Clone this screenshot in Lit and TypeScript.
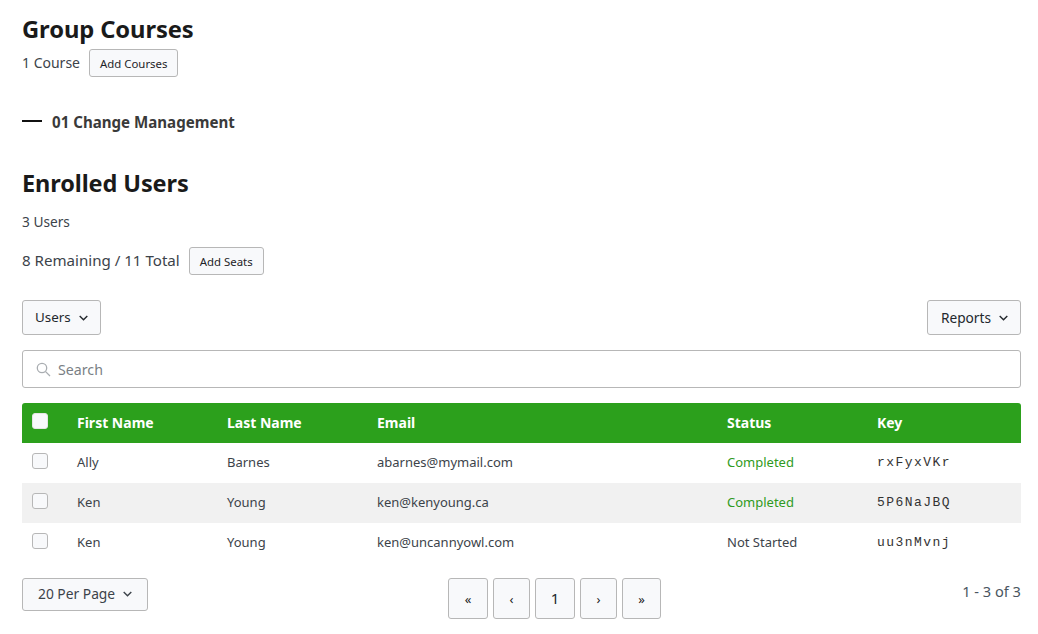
import { LitElement, html, css } from "lit";
import { customElement } from "lit/decorators.js";

const chevron = html`<svg class="chev" width="9" height="6" viewBox="0 0 9 6" fill="none" stroke="currentColor" stroke-width="1.4"><path d="M.7 1l3.8 3.8L8.3 1"/></svg>`;
const rows = [
  { first: "Ally", last: "Barnes", email: "abarnes@mymail.com", status: "Completed", key: "rxFyxVKr" },
  { first: "Ken", last: "Young", email: "ken@kenyoung.ca", status: "Completed", key: "5P6NaJBQ" },
  { first: "Ken", last: "Young", email: "ken@uncannyowl.com", status: "Not Started", key: "uu3nMvnj" },
];

@customElement("app-root")
export class AppRoot extends LitElement {
  static styles = css`
    :host { display: block; height: 634px; box-sizing: border-box; padding: 13px 17px 0 22px; font-family: "Noto Sans", "Open Sans", sans-serif; color: #3c434a; background: #fff; overflow: hidden; }
    h1, h2 { margin: 0; font-size: 23.5px; line-height: 32px; font-weight: 700; color: #1a1a1a; letter-spacing: -0.1px; }
    h1 { font-size: 23.75px; }
    .line { display: flex; align-items: center; line-height: 20px; }
    .lift { padding-bottom: 2px; }
    .courses { margin-top: 4px; height: 28px; gap: 9px; font-size: 14px; }
    .small { height: 28px; padding: 0 10px; font-size: 11.4px; color: #1d2327; }
    button { font-family: inherit; box-sizing: border-box; background: #f8f9fb; border: 1px solid #b7b7b7; border-radius: 3px; color: #23282d; display: inline-flex; align-items: center; justify-content: center; margin: 0; }
    .course { margin-top: 34px; height: 22px; display: flex; align-items: center; gap: 10px; font-size: 15.1px; font-weight: 700; color: #3a3a3a; }
    .dash { width: 20px; height: 2px; background: #111; margin-top: -2px; }
    h2 { margin-top: 34px; }
    .users { margin-top: 13px; height: 20px; font-size: 13.7px; }
    .seats { margin-top: 15px; height: 28px; gap: 9px; font-size: 15.1px; }
    .toolbar { margin-top: 25px; display: flex; justify-content: space-between; }
    .drop { height: 35px; padding: 0 12px 1px; gap: 8px; font-size: 13.7px; }
    .drop.u { font-size: 13.4px; }
    .drop.r { padding-left: 13px; }
    .chev { display: block; margin-top: 1px; }
    .search { margin-top: 15px; height: 38px; box-sizing: border-box; border: 1px solid #b7b7b7; border-radius: 3px; display: flex; align-items: center; gap: 7px; padding-left: 13px; font-size: 14.2px; color: #7a7f85; }
    .table { margin-top: 15px; }
    .row { display: grid; grid-template-columns: 55px 150px 150px 350px 150px 1fr; height: 40px; box-sizing: border-box; padding-bottom: 2px; align-items: center; font-size: 13px; color: #3c434a; }
    .row.alt { background: #f1f1f1; }
    .row.head { background: #2ca01c; color: #fff; font-weight: 700; font-size: 14px; border-radius: 3px 3px 0 0; }
    .box { display: block; width: 16px; height: 16px; box-sizing: border-box; margin: -2px 0 0 10px; background: #f8f9fb; border: 1px solid #b7b7b7; border-radius: 3px; }
    .head .box { border-color: #e5e5e5; }
    .done { color: #2f9a22; }
    .key { font-family: "Liberation Mono", monospace; font-size: 13px; letter-spacing: 1.45px; color: #333; }
    .footer { margin-top: 15px; display: flex; justify-content: space-between; align-items: flex-start; }
    .per { height: 33px; padding: 0 15px 2px; gap: 8px; font-size: 13.8px; color: #3c434a; }
    .pages { display: flex; gap: 5px; }
    .pages button { height: 41px; font-size: 13px; padding: 0; color: #222; }
    .pages button.num { font-size: 15px; color: #23282d; padding-bottom: 2px; }
    .count { width: 60px; text-align: right; white-space: nowrap; font-size: 14.6px; line-height: 20px; margin-top: 3px; color: #4a5560; }
    .w40 { width: 40px; }
    .w37 { width: 37px; }
    .w39 { width: 39px; }
  `;

  render() {
    return html`
      <h1>Group Courses</h1>
      <div class="line courses"><span>1 Course</span><button class="small">Add Courses</button></div>
      <div class="course"><span class="dash"></span><span>01 Change Management</span></div>
      <h2>Enrolled Users</h2>
      <div class="line users">3 Users</div>
      <div class="line seats"><span class="lift">8 Remaining / 11 Total</span><button class="small">Add Seats</button></div>
      <div class="toolbar">
        <button class="drop u">Users ${chevron}</button>
        <button class="drop r">Reports ${chevron}</button>
      </div>
      <div class="search">
        <svg width="15" height="15" viewBox="0 0 15 15" fill="none" stroke="#a9adb1" stroke-width="1.3"><circle cx="6" cy="6" r="4.7"/><path d="M9.6 9.6l4.4 4.4"/></svg>
        <span>Search</span>
      </div>
      <div class="table">
        <div class="row head">
          <span class="box"></span><span>First Name</span><span>Last Name</span><span>Email</span><span>Status</span><span>Key</span>
        </div>
        ${rows.map((r, i) => html`
          <div class="row ${i === 1 ? "alt" : ""}">
            <span class="box"></span><span>${r.first}</span><span>${r.last}</span><span>${r.email}</span>
            <span class="${r.status === "Completed" ? "done" : ""}">${r.status}</span>
            <span class="key">${r.key}</span>
          </div>`)}
      </div>
      <div class="footer">
        <button class="per">20 Per Page ${chevron}</button>
        <div class="pages">
          <button class="w40">«</button>
          <button class="w37">‹</button>
          <button class="num w40">1</button>
          <button class="w37">›</button>
          <button class="w39">»</button>
        </div>
        <div class="count">1 - 3 of 3</div>
      </div>
    `;
  }
}
